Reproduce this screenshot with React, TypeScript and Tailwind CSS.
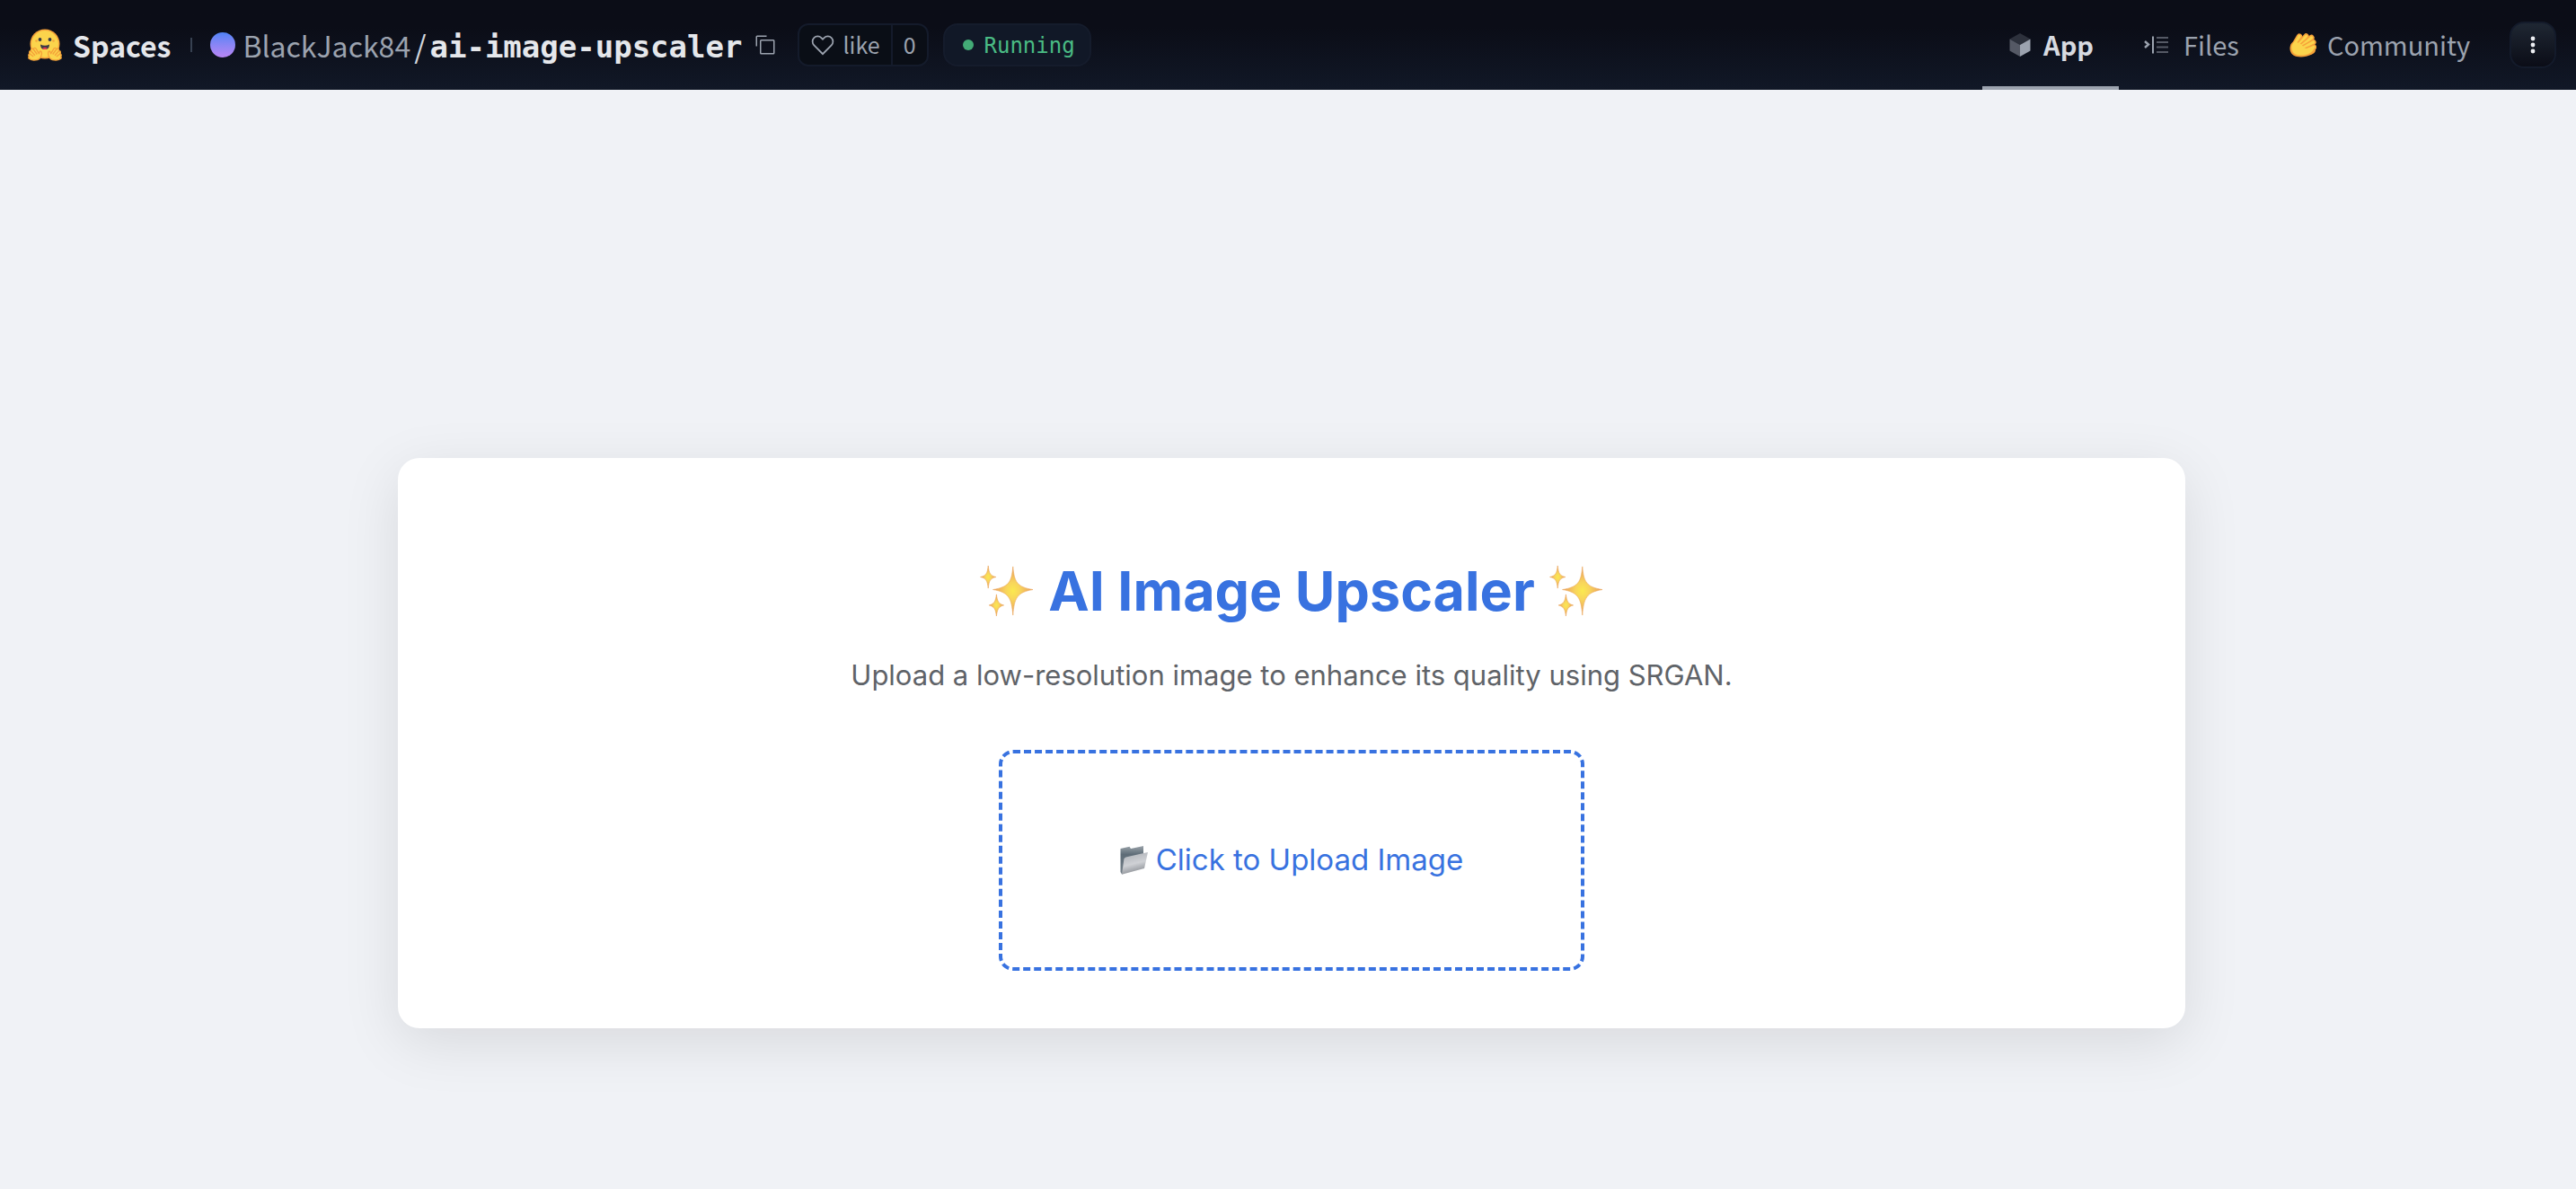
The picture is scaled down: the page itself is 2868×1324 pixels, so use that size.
import React from "react";

const sans = "font-['Noto_Sans_CJK_SC',sans-serif]";
const mono = "font-['DejaVu_Sans_Mono',monospace]";

function HuggingLogo() {
  return (
    <svg viewBox="0 0 38 36" className="h-9 w-[38px]" aria-hidden="true">
      <circle cx="19" cy="17" r="16.500" fill="#f5a13a" />
      <circle cx="19" cy="17" r="15" fill="#fbd44c" />
      <circle cx="13.500" cy="12" r="1.900" fill="#3a3b45" />
      <circle cx="24.500" cy="12" r="1.900" fill="#3a3b45" />
      <path d="M14 17.500q5 2.500 10 0q0 5.500-5 5.500t-5-5.500z" fill="#3a3b45" />
      <path d="M16.200 21.700q2.800-2 5.600 0q-1.300 1.300-2.800 1.300t-2.800-1.300z" fill="#ee3c53" />
      <circle cx="9.500" cy="13.500" r="1.300" fill="#f7a93e" />
      <circle cx="28.500" cy="13.500" r="1.300" fill="#f7a93e" />
      <g fill="#fbd44c" stroke="#f5a13a" strokeWidth="1.300" strokeLinejoin="round">
        <path d="M1.200 31c-1-2 0-3 1-3-1.500-2.500.3-3.800 1.300-3.300-.5-2.500 1.500-3.200 2.800-1.700.2-2.200 2.400-2 3.200-.2l3 5c.2-2 .8-3.200 2.200-2.700 1.300 1.900.7 4.300-.4 6.300-2 4.300-9.300 4.300-12.200 2.300q-2-.7-.9-2.700z" />
        <path d="M36.800 31c1-2 0-3-1-3 1.500-2.500-.3-3.800-1.300-3.300.5-2.500-1.500-3.200-2.800-1.700-.2-2.200-2.400-2-3.200-.2l-3 5c-.2-2-.8-3.200-2.200-2.700-1.300 1.900-.7 4.300.4 6.300 2 4.300 9.300 4.300 12.200 2.300q2-.7.9-2.700z" />
        <path d="M3.500 24.700l4.500 5M6.300 23l4 5.500M2.200 28l4 3M34.500 24.700l-4.500 5M31.700 23l-4 5.500M35.800 28l-4 3" fill="none" />
      </g>
    </svg>
  );
}

function CopyIcon() {
  return (
    <svg viewBox="0 0 32 32" className="size-6" fill="#9ca3af" aria-hidden="true">
      <path d="M28 10v18H10V10h18m0-2H10a2 2 0 0 0-2 2v18a2 2 0 0 0 2 2h18a2 2 0 0 0 2-2V10a2 2 0 0 0-2-2Z" />
      <path d="M4 18H2V4a2 2 0 0 1 2-2h14v2H4Z" />
    </svg>
  );
}

function HeartIcon() {
  return (
    <svg viewBox="0 0 32 32" className="size-7" fill="#9ca3af" aria-hidden="true">
      <path d="M22.450 6a5.470 5.470 0 0 1 3.910 1.640 5.700 5.700 0 0 1 0 8L16 26.130 5.640 15.640a5.700 5.700 0 0 1 0-8 5.480 5.480 0 0 1 7.820 0l2.540 2.600 2.530-2.580A5.440 5.440 0 0 1 22.450 6m0-2a7.470 7.470 0 0 0-5.340 2.240L16 7.360l-1.110-1.120a7.490 7.490 0 0 0-10.680 0 7.720 7.720 0 0 0 0 10.820L16 29l11.790-11.940a7.720 7.720 0 0 0 0-10.820A7.490 7.490 0 0 0 22.450 4Z" />
    </svg>
  );
}

function CubeIcon() {
  return (
    <svg viewBox="-2 0 28 26" className="h-[26px] w-7" aria-hidden="true">
      <path d="M12 0 23.500 6.500 12 13 .5 6.500Z" fill="#2d313c" />
      <path d="M.5 6.500 12 13v13L.5 19.500Z" fill="#555965" />
      <path d="M23.500 6.500 12 13v13l11.500-6.500Z" fill="#9ca3af" />
    </svg>
  );
}

function FilesIcon() {
  return (
    <svg viewBox="0 0 28 20" className="h-5 w-7" fill="none" aria-hidden="true">
      <path d="M1 6l4 3.500L1 13" stroke="#9ca3af" strokeWidth="2.400" />
      <path d="M10 .5v19" stroke="#9ca3af" strokeWidth="2" />
      <path d="M14 2h13M14 7h13M14 12.500h13M14 18h13" stroke="#555965" strokeWidth="2.200" />
    </svg>
  );
}

function HandIcon() {
  const fingers = ["M6 12 11 3.500", "M11 12 18.500 3.500", "M14 14 24.500 5", "M16 16 26.500 10", "M16 20 27 15.500"];
  return (
    <svg viewBox="0 0 30 27" className="h-[27px] w-[30px]" fill="none" strokeLinecap="round" aria-hidden="true">
      <path d="M.5 17C.5 12 3 9 8 8h12l8 7c2 4 1 6.500-3 8.500-6 3-12 3.500-17 2.500C3 25 .5 21 .5 17Z" fill="#f7a239" />
      {fingers.map((d) => (
        <g key={d}>
          <path d={d} stroke="#f7a239" strokeWidth="6.400" />
          <path d={d} stroke="#fbd44c" strokeWidth="3.400" />
        </g>
      ))}
      <path d="M2.500 17c-.5-4 2-6.500 4-8.500 2 2 4 2.500 6 3.500l4.500 4.500c3 1 6 .5 10.500-.5-.5 3-2 4.500-4.500 6-4.500 2.500-10 3-14 2.200C5 23.500 3 20.500 2.500 17Z" fill="#fbd44c" />
    </svg>
  );
}

function Sparkles({ id }: { id: string }) {
  return (
    <svg viewBox="0 0 62 60" className="h-[58px] w-[60px]" aria-hidden="true">
      <defs>
        <radialGradient id={id}>
          <stop offset="0" stopColor="#fbe94f" />
          <stop offset=".35" stopColor="#f8d55c" />
          <stop offset="1" stopColor="#e99a5c" />
        </radialGradient>
      </defs>
      <g fill={`url(#${id})`} stroke="#eba557" strokeWidth=".6">
        <path d="M38 2C39.500 20 43 25.500 61 28.500 43 31.500 39.500 38 38 58 36.500 38 33 31.500 15 28.500 33 25.500 36.500 20 38 2Z" />
        <path d="M9.500 1C10.500 10 12 12.500 18.500 14 12 15.500 10.500 18 9.500 27 8.500 18 7 15.500 .5 14 7 12.500 8.500 10 9.500 1Z" />
        <path d="M19 34C20 42 21.500 45 27.500 46.500 21.500 48 20 51 19 59 18 51 16.500 48 10.500 46.500 16.500 45 18 42 19 34Z" />
      </g>
    </svg>
  );
}

function FolderIcon() {
  return (
    <svg viewBox="0 0 32 32" className="size-8" aria-hidden="true">
      <defs>
        <linearGradient id="folder-back" x1="0" y1="0" x2="0" y2="1">
          <stop offset="0" stopColor="#9aa3aa" />
          <stop offset=".3" stopColor="#5e6c77" />
          <stop offset="1" stopColor="#78838b" />
        </linearGradient>
        <linearGradient id="folder-front" x1="0" y1="0" x2=".3" y2="1">
          <stop offset="0" stopColor="#a9adb3" />
          <stop offset=".6" stopColor="#cfd1d5" />
          <stop offset="1" stopColor="#8d9197" />
        </linearGradient>
      </defs>
      <path d="M.5 3 10.500.8 12 3 26 0v20L2 31.500.5 29Z" fill="url(#folder-back)" />
      <path d="M6.500 12.500 31 7 27 25 2 31.800 4.500 14Z" fill="url(#folder-front)" />
    </svg>
  );
}

const tab = "flex items-center border-b-4 px-7 pt-1 text-[29px]";

function Header() {
  return (
    <header className={`flex h-[100px] shrink-0 items-stretch justify-between bg-linear-to-b from-[#0b0d17] from-30% to-[#111827] pr-[22px] pl-[31px] text-[#9ca3af] ${sans}`}>
      <div className="flex items-center">
        <a href="#spaces" className="flex items-center gap-3 text-[32px] font-bold text-[#e5e7eb]">
          <HuggingLogo />
          Spaces
        </a>
        <span className="mr-5 ml-[22px] h-4 w-0.5 bg-[#374151]" />
        <span className="mr-2 size-7 rounded-full bg-linear-to-b from-[#4f83f5] to-[#b885f4]" />
        <a href="#owner" className="text-[32px]">BlackJack84</a>
        <span className="mx-1 text-[34px] text-[#d1d5db]">/</span>
        <h1 className="pt-1">
          <a href="#space" className={`${mono} text-[34px] font-bold text-[#e5e7eb]`}>ai-image-upscaler</a>
        </h1>
        <button type="button" aria-label="Copy name" className="ml-3.5"><CopyIcon /></button>
        <div className="ml-6 flex h-12 items-stretch rounded-xl border-2 border-[#141b2b] bg-[#0a0e16] text-[25px]">
          <button type="button" className="flex items-center gap-2 border-r-2 border-[#141b2b] px-3">
            <HeartIcon />
            like
          </button>
          <button type="button" aria-label="Likes" className="px-3">0</button>
        </div>
        <div className={`ml-4 flex h-12 items-center gap-3 rounded-2xl border-2 border-[#151c2c] bg-[#111827] pr-4 pl-5 ${mono} text-2xl text-[#4abb84]`}>
          <span className="size-3 rounded-full bg-[#43ab76]" />
          <span className="pt-0.5">Running</span>
        </div>
      </div>
      <div className="flex items-stretch">
        <nav className="flex">
          <a href="#app" className={`${tab} gap-3 border-[#9ca3af] font-bold text-[#d7dae0]`}><CubeIcon />App</a>
          <a href="#files" className={`${tab} gap-4 border-transparent`}><FilesIcon />Files</a>
          <a href="#community" className={`${tab} gap-3 border-transparent`}><HandIcon />Community</a>
        </nav>
        <button type="button" aria-label="More options" className="ml-4 flex size-[52px] items-center justify-center self-center rounded-2xl border-2 border-[#141b2b] bg-linear-to-b from-[#1f2733] to-[#0b0d17]">
          <svg viewBox="0 0 6 20" className="h-5 w-1.5" fill="#eceef2" aria-hidden="true">
            <circle cx="3" cy="3" r="2.400" />
            <circle cx="3" cy="10" r="2.400" />
            <circle cx="3" cy="17" r="2.400" />
          </svg>
        </button>
      </div>
    </header>
  );
}

export default function App() {
  return (
    <div className="flex min-h-screen flex-col bg-[#f0f2f6]">
      <Header />
      <main className="flex grow flex-col items-center justify-end pr-2 pb-[179px] pl-4 font-['Inter',sans-serif]">
        <section className="flex w-[70%] flex-col items-center rounded-3xl bg-white px-16 pt-[108px] pb-16 shadow-[0_16px_64px_rgba(0,0,0,0.1)]">
          <h2 className="flex items-center gap-4 text-[61px] leading-20 font-bold text-[#3872e0]">
            <Sparkles id="sparkle-left" />
            AI Image Upscaler
            <Sparkles id="sparkle-right" />
          </h2>
          <p className="mt-[34px] text-[31px] leading-10 text-[#5f6368]">Upload a low-resolution image to enhance its quality using SRGAN.</p>
          <button type="button" className="mt-[63px] flex h-[246px] w-[652px] items-center justify-center gap-2 rounded-2xl border-4 border-dashed border-[#3872e0] text-[33px] text-[#3872e0]">
            <FolderIcon />
            Click to Upload Image
          </button>
        </section>
      </main>
    </div>
  );
}
